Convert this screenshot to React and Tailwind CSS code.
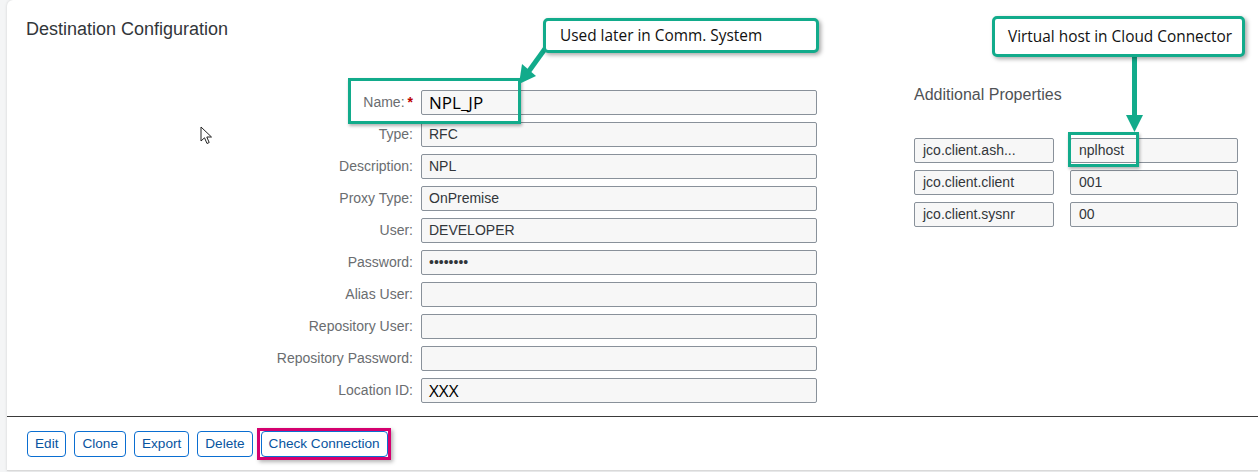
import React from 'react';

const fields = [
  { label: 'Name:', value: 'NPL_JP', required: true, big: true },
  { label: 'Type:', value: 'RFC' },
  { label: 'Description:', value: 'NPL' },
  { label: 'Proxy Type:', value: 'OnPremise' },
  { label: 'User:', value: 'DEVELOPER' },
  { label: 'Password:', value: '••••••••' },
  { label: 'Alias User:', value: '' },
  { label: 'Repository User:', value: '' },
  { label: 'Repository Password:', value: '' },
  { label: 'Location ID:', value: 'XXX', big: true },
];

const props = [
  { key: 'jco.client.ash...', value: 'nplhost' },
  { key: 'jco.client.client', value: '001' },
  { key: 'jco.client.sysnr', value: '00' },
];

function FieldRow({ field }) {
  return (
    <div className="flex items-center h-[25px]">
      <div className="w-[414px] pr-[8px] text-right text-[14px] text-[#6a6d70] flex justify-end items-center">
        <span>{field.label}</span>
        {field.required && <span className="text-[#bb0000] ml-[3px] font-bold">*</span>}
      </div>
      <div className="w-[396px] h-[25px] bg-[#f7f7f7] border border-[#89919a] rounded-[2px] flex items-center pl-[7px]">
        <span
          className={
            field.big
              ? "text-[17px] text-black font-['Open_Sans',sans-serif]"
              : 'text-[14px] text-[#32363a]'
          }
        >
          {field.value}
        </span>
      </div>
    </div>
  );
}

function Btn({ children }) {
  return (
    <button className="h-[26px] px-[7px] border border-[#0a6ed1] rounded-[4px] text-[13.6px] text-[#0854a0] bg-white">
      {children}
    </button>
  );
}

function Callout({ className, children }) {
  return (
    <div
      className={`absolute bg-white border-[3px] border-[#12ab8b] rounded-[5px] shadow-[2px_2px_4px_rgba(0,0,0,0.35)] text-[15.4px] text-[#111] font-['Open_Sans',sans-serif] flex items-center ${className}`}
    >
      {children}
    </div>
  );
}

export default function App() {
  return (
    <div className="relative w-[1258px] h-[472px] bg-[#f4f5f6] pl-[7px] overflow-hidden font-['Liberation_Sans',Arial,sans-serif]">
      <div className="h-[471px] bg-white rounded-tl-[6px] border-b border-[#d9d9d9] shadow-[0_0_3px_rgba(0,0,0,0.15)] flex flex-col">
        <div className="pt-[18px] pl-[19px] text-[18px] leading-[22px] text-[#32363a]">
          Destination Configuration
        </div>

        <div className="mt-[45px] flex items-start">
          <div className="pt-[5px] flex flex-col gap-[7px]">
            {fields.map((f) => (
              <FieldRow key={f.label} field={f} />
            ))}
          </div>

          <div className="ml-[97px] flex flex-col">
            <div className="text-[16px] leading-[20px] text-[#4f5256]">Additional Properties</div>
            <div className="mt-[33px] flex flex-col gap-[7px]">
              {props.map((p) => (
                <div key={p.key} className="flex gap-[16px]">
                  <div className="w-[140px] h-[25px] bg-[#f7f7f7] border border-[#89919a] rounded-[2px] flex items-center pl-[8px] text-[14px] text-[#32363a]">
                    {p.key}
                  </div>
                  <div className="w-[168px] h-[25px] bg-[#f7f7f7] border border-[#89919a] rounded-[2px] flex items-center pl-[8px] text-[14px] text-[#32363a]">
                    {p.value}
                  </div>
                </div>
              ))}
            </div>
          </div>
        </div>

        <div className="mt-[13px] h-px bg-[#3a3a3a]" />

        <div className="mt-[14px] pl-[20px] flex gap-[8px]">
          <Btn>Edit</Btn>
          <Btn>Clone</Btn>
          <Btn>Export</Btn>
          <Btn>Delete</Btn>
          <span className="relative flex">
            <Btn>Check Connection</Btn>
            <span className="absolute -left-[4px] -right-[3px] -top-[3px] -bottom-[3px] border-[3px] border-[#d4006e] shadow-[2px_2px_4px_rgba(0,0,0,0.3)] pointer-events-none" />
          </span>
        </div>
      </div>

      {/* annotations */}
      <div className="absolute left-[348px] top-[78px] w-[173px] h-[46px] border-[3px] border-[#12ab8b] shadow-[1px_2px_3px_rgba(0,0,0,0.3)]" />
      <div className="absolute left-[1068px] top-[132px] w-[71px] h-[35px] border-[3px] border-[#12ab8b] shadow-[1px_2px_3px_rgba(0,0,0,0.3)]" />

      <svg className="absolute left-0 top-0 pointer-events-none" width="1258" height="472">
        <line x1="547" y1="46" x2="529" y2="71" stroke="#12ab8b" strokeWidth="5" />
        <polygon points="519,84 536,76 522,64" fill="#12ab8b" />
        <rect x="1132" y="55" width="5" height="61" fill="#12ab8b" />
        <polygon points="1126,115 1143,115 1134.5,132" fill="#12ab8b" />
      </svg>

      <Callout className="left-[543px] top-[18px] w-[276px] h-[35px] pl-[14px]">
        Used later in Comm. System
      </Callout>
      <Callout className="left-[992px] top-[16px] w-[253px] h-[41px] pl-[13px]">
        Virtual host in Cloud Connector
      </Callout>

      <svg className="absolute left-[200px] top-[126px]" width="14" height="20" viewBox="0 0 14 20">
        <path
          d="M1 1 L1 15 L4.5 11.8 L7 17.5 L9.2 16.5 L6.8 11 L11.5 11 Z"
          fill="white"
          stroke="#222"
          strokeWidth="1"
          strokeLinejoin="round"
        />
      </svg>
    </div>
  );
}
